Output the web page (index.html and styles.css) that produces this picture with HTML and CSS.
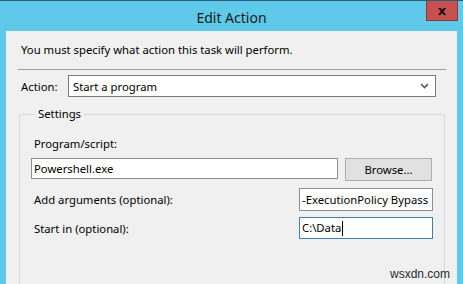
FILE: index.html
```html
<!DOCTYPE html>
<html lang="en">
<head>
    <meta charset="UTF-8">
    <title>Edit Action</title>
    <link rel="stylesheet" href="styles.css">
</head>
<body>
    <div class="window">
        <div class="titlebar">
            <span class="title">Edit Action</span>
            <button class="close">x</button>
        </div>
        <div class="panel">
            <p class="message">You must specify what action this task will perform.</p>
            <hr class="sep">
            <div class="action-row">
                <label>Action:</label>
                <div class="select">
                    <span>Start a program</span>
                    <svg class="chevron" width="9" height="6" viewBox="0 0 9 6">
                        <path d="M1 1 L4.5 4.5 L8 1" fill="none" stroke="#555" stroke-width="1.6"/>
                    </svg>
                </div>
            </div>
            <fieldset class="settings">
                <legend>Settings</legend>
                <div class="field-label">Program/script:</div>
                <div class="program-row">
                    <div class="input program">Powershell.exe</div>
                    <button class="browse">Browse...</button>
                </div>
                <div class="opt-row">
                    <span>Add arguments (optional):</span>
                    <div class="input small">-ExecutionPolicy Bypass</div>
                </div>
                <div class="opt-row">
                    <span>Start in (optional):</span>
                    <div class="input small focused">C:\Data<span class="caret"></span></div>
                </div>
            </fieldset>
        </div>
    </div>
    <div class="watermark">wsxdn.com</div>
</body>
</html>
```

FILE: styles.css
```css
* {
    margin: 0;
    padding: 0;
    box-sizing: border-box;
}

body {
    width: 463px;
    height: 284px;
    overflow: hidden;
    background: #5ec9e8;
    border-top: 1px solid #2b5f78;
    font-family: "Noto Sans", sans-serif;
    font-size: 11.3px;
    color: #000;
    position: relative;
}

.titlebar {
    height: 30px;
    position: relative;
    display: flex;
    justify-content: center;
    align-items: center;
}

.title {
    font-size: 14px;
    color: #1b1b1b;
    margin-top: 2px;
}

.close {
    position: absolute;
    top: -1px;
    left: 426px;
    width: 32px;
    height: 21px;
    border: 1px solid #8e3a36;
    border-top: none;
    background: #c75050;
    color: #111;
    font-family: "DejaVu Sans", sans-serif;
    font-weight: bold;
    font-size: 13px;
    line-height: 17px;
}

.panel {
    margin-left: 6px;
    width: 451px;
    height: 253px;
    overflow: hidden;
    background: #f0f0f0;
    padding-top: 11px;
}

.message {
    padding-left: 15px;
    line-height: 16px;
}

.sep {
    border: none;
    border-top: 1px solid #a0a0a0;
    margin: 11px 0 0 12px;
    width: 428px;
}

.action-row {
    display: flex;
    align-items: center;
    margin-top: 5px;
    padding-left: 15px;
}

.action-row label {
    width: 47px;
}

.select {
    width: 368px;
    height: 22px;
    border: 1px solid #7a7a7a;
    background: #fff;
    display: flex;
    align-items: center;
    justify-content: space-between;
    padding: 0 6px 0 4px;
}

.settings {
    margin: 9px 0 0 13px;
    width: 426px;
    height: 190px;
    border: 1px solid #d6dbe0;
    border-radius: 3px;
    padding: 0 0 0 11px;
}

.settings legend {
    margin-left: 4px;
    padding: 0 3px;
    line-height: 16px;
}

.field-label {
    margin-top: 14px;
    padding-left: 3px;
    line-height: 16px;
}

.program-row {
    display: flex;
    margin-top: 6px;
}

.input {
    background: #fff;
    border: 1px solid #8f8f8f;
    height: 21px;
    line-height: 19px;
    padding-left: 2px;
    white-space: nowrap;
    overflow: hidden;
}

.program {
    width: 307px;
}

.browse {
    margin-left: 7px;
    width: 87px;
    height: 23px;
    background: #e1e1e1;
    border: 1px solid #adadad;
    font-family: inherit;
    font-size: 11.3px;
    color: #000;
}

.opt-row {
    display: flex;
    align-items: center;
    justify-content: space-between;
    width: 402px;
    padding-left: 3px;
    margin-top: 6px;
}

.opt-row + .opt-row {
    margin-top: 6px;
}

.program-row + .opt-row {
    margin-top: 7px;
}

.small {
    width: 134px;
    height: 23px;
    line-height: 21px;
}

.focused {
    height: 22px;
    line-height: 20px;
    border-color: #3f7fb3;
}

.caret {
    display: inline-block;
    width: 1px;
    height: 15px;
    background: #000;
    vertical-align: middle;
    margin-left: 1px;
}

.watermark {
    position: absolute;
    left: 390px;
    top: 266px;
    font-family: "Liberation Sans", sans-serif;
    font-size: 12px;
    color: #1f2a30;
}
```
